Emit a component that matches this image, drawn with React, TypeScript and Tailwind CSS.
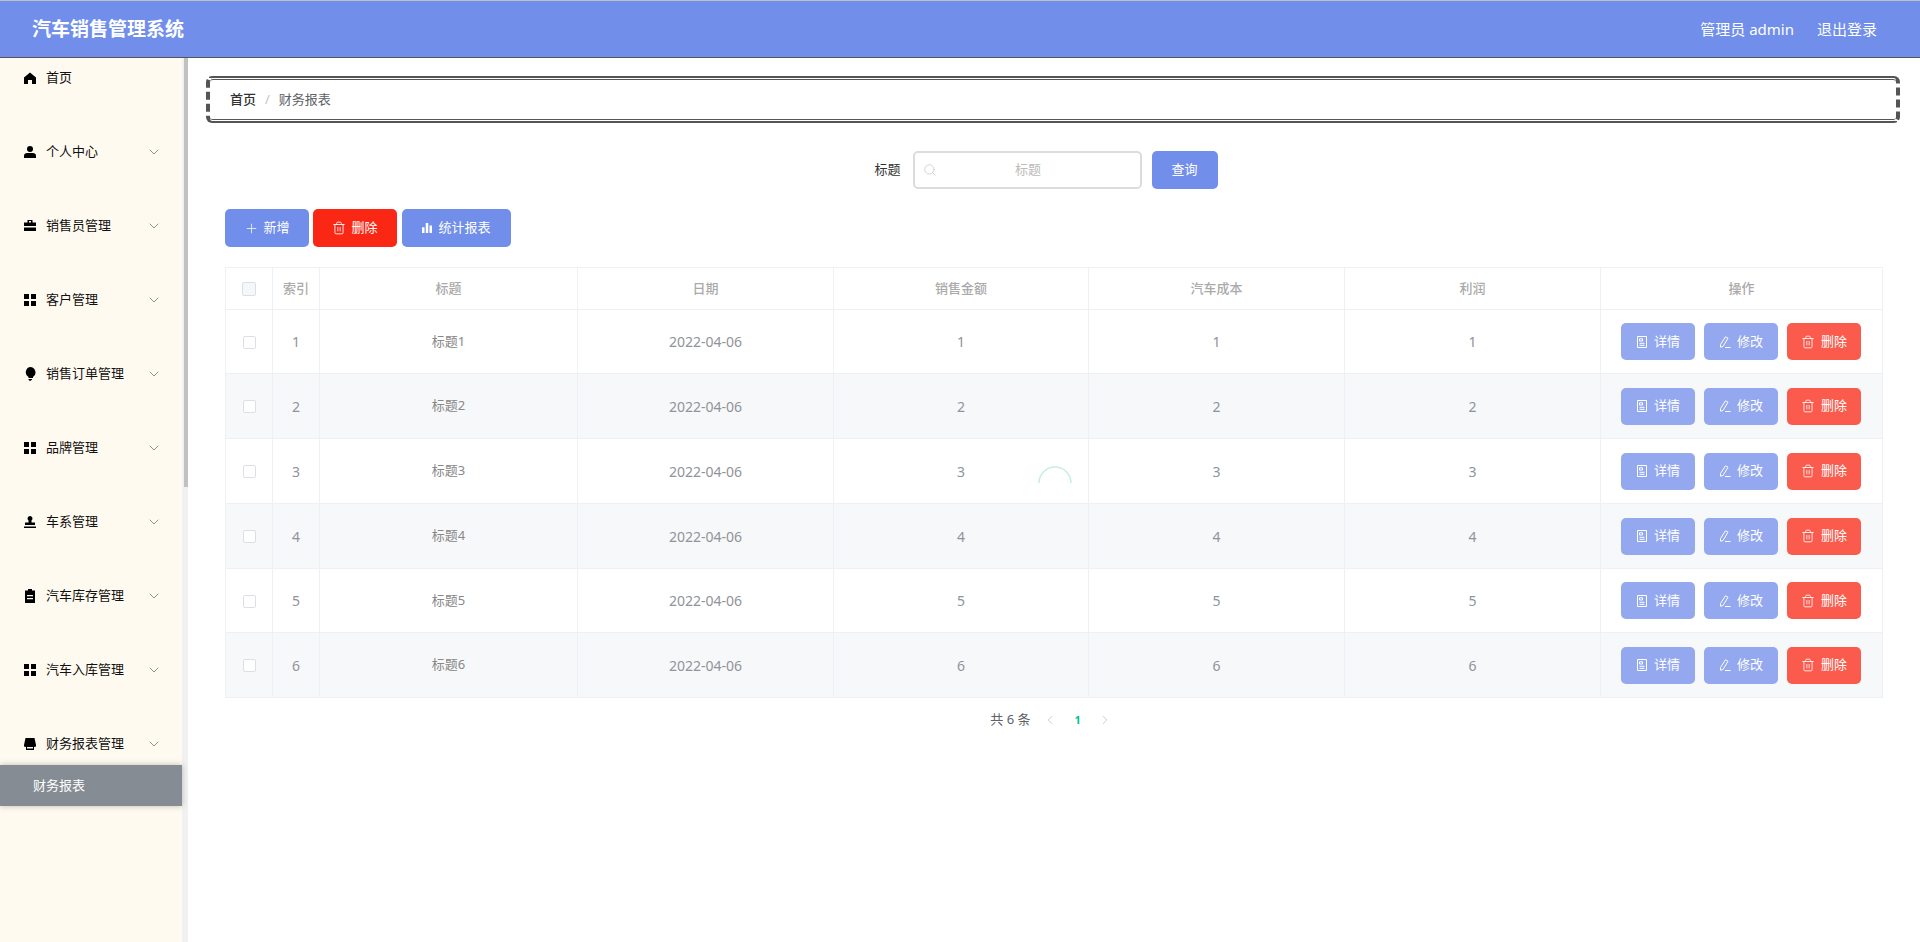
import React from "react";
import { ChevronDown, ChevronLeft, ChevronRight, Plus, Search, Trash2 } from "lucide-react";

const font = "font-['Noto_Sans','Noto_Sans_CJK_SC',sans-serif]";

function HomeIcon() {
  return (
    <svg viewBox="0 0 12 12" className="w-3 h-3 fill-black">
      <path d="M6 .5 12 5.500V12H8V8H4v4H0V5.500z" />
    </svg>
  );
}
function UserIcon() {
  return (
    <svg viewBox="0 0 12 12" className="w-3 h-3 fill-black">
      <circle cx="6" cy="3" r="3" />
      <path d="M0 12V9.500C0 8 1.500 7 3 7h6c1.500 0 3 1 3 2.500V12z" />
    </svg>
  );
}
function CaseIcon() {
  return (
    <svg viewBox="0 0 12 12" className="w-3 h-3 fill-black">
      <path d="M3.500 0h5v2.500H12V6H0V2.500h3.500zM5 1v1.500h2V1zM0 7.500h12V11H0z" />
    </svg>
  );
}
function GridIcon() {
  return (
    <svg viewBox="0 0 12 12" className="w-3 h-3 fill-black">
      <path d="M0 0h5v5H0zM7 0h5v5H7zM0 7h5v5H0zM7 7h5v5H7z" />
    </svg>
  );
}
function BulbIcon() {
  return (
    <svg viewBox="0 0 12 14" className="w-3 h-3.5 fill-black">
      <path d="M6 0a5.500 5.500 0 0 1 3 10.100V11H4.500v-.9A5.500 5.500 0 0 1 6 0zM4.500 12h3.500v.8L6 14l-1.500-1.200z" />
    </svg>
  );
}
function StampIcon() {
  return (
    <svg viewBox="0 0 12 12" className="w-3 h-3 fill-black">
      <path d="M6 0a2.500 2.500 0 0 1 1.500 4.500V6.500H11V9H1V6.500h3.500V4.500A2.500 2.500 0 0 1 6 0zM0 10.500h12V12H0z" />
    </svg>
  );
}
function ClipIcon() {
  return (
    <svg viewBox="0 0 12 14" className="w-3 h-3.5 fill-black">
      <path d="M4 0h4v1.500h3V14H1V1.500h3zM3 6v1.200h6V6zM3 9v1.200h6V9z" />
    </svg>
  );
}
function TrayIcon() {
  return (
    <svg viewBox="0 0 12 12" className="w-3 h-3 fill-black">
      <path d="M1.500 0h9L12 7v1.500l-2 .5v3H2V9L0 8.500V7zM3 9v1.500h6V9z" />
    </svg>
  );
}
function BarsIcon() {
  return (
    <svg viewBox="0 0 12 12" className="w-2.5 h-2.5 fill-white">
      <path d="M0 5h3v7H0zM4.500 0h3v12h-3zM9 3h3v9H9z" />
    </svg>
  );
}
function DocIcon() {
  return (
    <svg viewBox="0 0 12 12" className="w-3 h-3 fill-none stroke-white" strokeWidth="1">
      <path d="M1.500.5h9v11h-9zM3.500 2.800h3v2.200h-3zM3.500 7.300h5M3.500 9.300h5" />
    </svg>
  );
}
function PenIcon() {
  return (
    <svg viewBox="0 0 12 12" className="w-3 h-3 fill-none stroke-white" strokeWidth="1">
      <path d="M6.500.8 9 2.200 4 10.500 1.500 11.200 1.500 8.500zM6 11.500h5.500" />
    </svg>
  );
}

const menus: { name: string; icon: React.ReactNode }[] = [
  { name: "个人中心", icon: <UserIcon /> },
  { name: "销售员管理", icon: <CaseIcon /> },
  { name: "客户管理", icon: <GridIcon /> },
  { name: "销售订单管理", icon: <BulbIcon /> },
  { name: "品牌管理", icon: <GridIcon /> },
  { name: "车系管理", icon: <StampIcon /> },
  { name: "汽车库存管理", icon: <ClipIcon /> },
  { name: "汽车入库管理", icon: <GridIcon /> },
  { name: "财务报表管理", icon: <TrayIcon /> },
];

const cols = ["标题", "日期", "销售金额", "汽车成本", "利润"];
const rows = [
  { n: 1, h: "h-[64px]" },
  { n: 2, h: "h-[65px]" },
  { n: 3, h: "h-[65px]" },
  { n: 4, h: "h-[65px]" },
  { n: 5, h: "h-[64px]" },
  { n: 6, h: "h-[65px]" },
];

function Sidebar() {
  return (
    <aside className="relative w-[188px] shrink-0 flex bg-[#f1f1f1]">
      <div className="w-[182px] h-full bg-[#fffaf0]">
        <div className="h-[40px] pl-[24px] flex items-center gap-[10px] text-[13px] text-[#111]">
          <HomeIcon />
          <span>首页</span>
        </div>
        <div className="h-[33px]" />
        {menus.map((m, i) => (
          <div key={m.name} className={i === menus.length - 1 ? "" : "mb-[32px]"}>
            <div className="h-[42px] pl-[24px] pr-[20px] flex items-center text-[13px] text-[#111]">
              <span className="w-[12px] flex justify-center mr-[10px]">{m.icon}</span>
              <span className="flex-1">{m.name}</span>
              <ChevronDown size={16} strokeWidth={1.2} className="text-[#777]" />
            </div>
          </div>
        ))}
        <div className="h-[41px] pl-[33px] flex items-center bg-[#868c94] text-[13px] text-white shadow-[0_0_6px_rgba(0,0,0,0.25)]">
          财务报表
        </div>
      </div>
      <div className="absolute right-0 top-0 w-[4px] h-[429px] bg-[#c1c1c1]" />
    </aside>
  );
}

function RowButton({ tone, icon, label }: { tone: string; icon: React.ReactNode; label: string }) {
  return (
    <button className={`w-[74px] h-[37px] rounded-[5px] flex items-center justify-center gap-[6px] text-[13px] text-white ${tone}`}>
      {icon}
      {label}
    </button>
  );
}

export default function App() {
  return (
    <div className={`h-[942px] w-full overflow-hidden flex flex-col bg-white ${font}`}>
      <header className="h-[58px] shrink-0 bg-[#708eea] border-t border-t-[#bcc0cc] border-b border-b-[#555] flex items-center justify-between pl-[32px] pr-[43px] text-white">
        <span className="text-[19px] font-bold">汽车销售管理系统</span>
        <div className="flex gap-[23px] text-[15px]">
          <span>管理员 admin</span>
          <span>退出登录</span>
        </div>
      </header>
      <div className="flex-1 flex min-h-0">
        <Sidebar />
        <main className="flex-1 min-w-0 pt-[18px]">
          <div className="ml-[18px] mr-[20px] h-[47px] rounded-[6px] border-x-4 border-y-2 border-[#555] [border-style:solid_dashed]">
            <div className="my-[1px] h-[41px] rounded-[3px] border-y border-[#555] flex items-center pl-[20px] text-[13px]">
              <span className="font-medium text-[#303133]">首页</span>
              <span className="mx-[9px] text-[#c0c4cc]">/</span>
              <span className="text-[#606266]">财务报表</span>
            </div>
          </div>
          <div className="mt-[28px] pr-[16px] flex justify-center items-center">
            <span className="text-[13px] text-[#333] mr-[12px]">标题</span>
            <div className="w-[229px] h-[38px] rounded-[5px] border-2 border-[#dcdcdc] flex items-center pl-[8px]">
              <Search size={14} strokeWidth={1.2} className="text-[#c0c4cc]" />
              <span className="flex-1 text-center pr-[20px] text-[13px] text-[#bbb]">标题</span>
            </div>
            <button className="ml-[10px] w-[66px] h-[38px] rounded-[5px] bg-[#708eea] text-white text-[13px]">查询</button>
          </div>
          <div className="mt-[20px] ml-[37px] flex">
            <button className="w-[84px] h-[38px] rounded-[5px] bg-[#708eea] text-white text-[13px] flex items-center justify-center gap-[4px]">
              <Plus size={15} strokeWidth={1.2} />
              新增
            </button>
            <button className="ml-[4px] w-[84px] h-[38px] rounded-[5px] bg-[#f92714] text-white text-[13px] flex items-center justify-center gap-[5px]">
              <Trash2 size={14} strokeWidth={1.5} />
              删除
            </button>
            <button className="ml-[5px] w-[109px] h-[38px] rounded-[5px] bg-[#708eea] text-white text-[13px] flex items-center justify-center gap-[6px]">
              <BarsIcon />
              统计报表
            </button>
          </div>
          <div className="relative mt-[20px] ml-[37px] mr-[37px]">
            <table className="w-full table-fixed border-collapse text-[13px] text-center text-[#888]">
              <colgroup>
                <col className="w-[47px]" />
                <col className="w-[47px]" />
                <col className="w-[258px]" />
                <col className="w-[256px]" />
                <col className="w-[255px]" />
                <col className="w-[256px]" />
                <col className="w-[256px]" />
                <col />
              </colgroup>
              <thead>
                <tr className="h-[42px]">
                  <th className="border border-[#eff0f5] font-medium">
                    <span className="inline-block w-[14px] h-[14px] align-middle rounded-[2px] border border-[#dcdfe6] bg-[#f5f7fa]" />
                  </th>
                  <th className="border border-[#eff0f5] font-medium text-[#aaa]">索引</th>
                  {cols.map((c) => (
                    <th key={c} className="border border-[#eff0f5] font-medium text-[#aaa]">{c}</th>
                  ))}
                  <th className="border border-[#eff0f5] font-medium text-[#aaa]">操作</th>
                </tr>
              </thead>
              <tbody>
                {rows.map(({ n, h }) => (
                  <tr key={n} className={`${h} ${n % 2 === 0 ? "bg-[#f7f8fa]" : ""}`}>
                    <td className="border border-[#eff0f5]">
                      <span className="inline-block w-[13px] h-[13px] align-middle rounded-[2px] border border-[#dcdfe6] bg-white" />
                    </td>
                    <td className="border border-[#eff0f5] text-[14px] text-[#909399]">{n}</td>
                    <td className="border border-[#eff0f5]">标题{n}</td>
                    <td className="border border-[#eff0f5] text-[14px] text-[#909399]">2022-04-06</td>
                    <td className="border border-[#eff0f5] text-[14px] text-[#909399]">{n}</td>
                    <td className="border border-[#eff0f5] text-[14px] text-[#909399]">{n}</td>
                    <td className="border border-[#eff0f5] text-[14px] text-[#909399]">{n}</td>
                    <td className="border border-[#eff0f5]">
                      <div className="flex justify-center gap-[9px] pr-[1px]">
                        <RowButton tone="bg-[#93a8ee]" icon={<DocIcon />} label="详情" />
                        <RowButton tone="bg-[#93a8ee]" icon={<PenIcon />} label="修改" />
                        <RowButton tone="bg-[#fb5b4d]" icon={<Trash2 size={14} strokeWidth={1.4} />} label="删除" />
                      </div>
                    </td>
                  </tr>
                ))}
              </tbody>
            </table>
            <svg viewBox="0 0 34 20" className="absolute left-[813px] top-[197px] w-[34px] h-[20px] fill-none stroke-[#c4efe3]" strokeWidth="1.500">
              <path d="M1 19A16 16 0 0 1 33 19" />
            </svg>
          </div>
          <div className="mt-[12px] pr-[6px] flex justify-center items-center text-[13px] text-[#606266]">
            <span>共 6 条</span>
            <ChevronLeft size={14} strokeWidth={1.5} className="ml-[13px] text-[#c0c4cc]" />
            <span className="mx-[17px] text-[11px] font-bold text-[#00c292]">1</span>
            <ChevronRight size={14} strokeWidth={1.5} className="text-[#c0c4cc]" />
          </div>
        </main>
      </div>
    </div>
  );
}
